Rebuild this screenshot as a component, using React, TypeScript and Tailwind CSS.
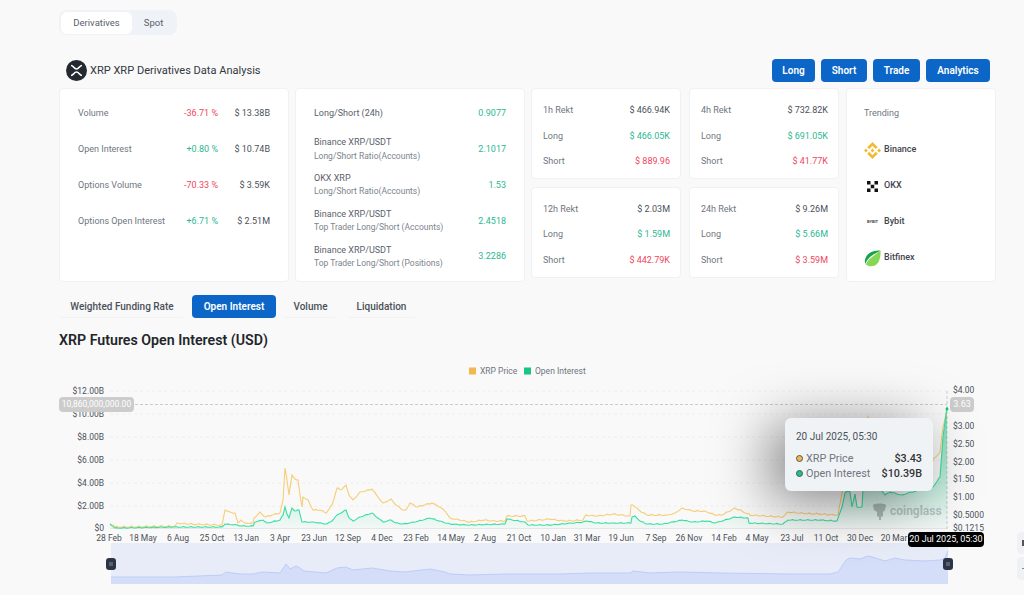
import { SiBinance } from "react-icons/si";

const font = "font-['Roboto','Liberation_Sans',sans-serif]";

const volumeRows = [
  { label: "Volume", pct: "-36.71 %", up: false, value: "$ 13.38B" },
  { label: "Open Interest", pct: "+0.80 %", up: true, value: "$ 10.74B" },
  { label: "Options Volume", pct: "-70.33 %", up: false, value: "$ 3.59K" },
  { label: "Options Open Interest", pct: "+6.71 %", up: true, value: "$ 2.51M" },
];

const ratioRows = [
  { title: "Long/Short (24h)", sub: "", value: "0.9077" },
  { title: "Binance XRP/USDT", sub: "Long/Short Ratio(Accounts)", value: "2.1017" },
  { title: "OKX XRP", sub: "Long/Short Ratio(Accounts)", value: "1.53" },
  { title: "Binance XRP/USDT", sub: "Top Trader Long/Short (Accounts)", value: "2.4518" },
  { title: "Binance XRP/USDT", sub: "Top Trader Long/Short (Positions)", value: "3.2286" },
];

const rekt = [
  [
    { name: "1h Rekt", total: "$ 466.94K", long: "$ 466.05K", short: "$ 889.96" },
    { name: "12h Rekt", total: "$ 2.03M", long: "$ 1.59M", short: "$ 442.79K" },
  ],
  [
    { name: "4h Rekt", total: "$ 732.82K", long: "$ 691.05K", short: "$ 41.77K" },
    { name: "24h Rekt", total: "$ 9.26M", long: "$ 5.66M", short: "$ 3.59M" },
  ],
];

const price =
  "110,524 113,525 115,527 175,526 177,523 190,524 222,525 225,510 230,512 235,513 238,523 241,520 245,523 253,523 254,518 260,512 265,517 272,515 280,513 283,500 285,468 287,480 289,495 292,475 295,479 298,480 300,495 302,507 303,497 308,500 313,510 320,510 326,513 332,505 337,488 341,490 346,485 349,495 353,500 360,492 365,491 372,489 378,497 383,503 391,499 396,505 403,510 406,510 410,503 417,507 424,505 432,503 440,507 446,512 450,518 460,520 470,522 483,520 495,521 505,521 507,516 525,516 527,521 550,519 565,521 583,520 586,515 597,516 613,514 630,516 631,505 633,505 640,511 647,515 667,515 675,513 682,508 693,511 705,511 715,515 722,515 735,508 742,511 750,515 783,517 788,512 800,513 820,514 838,515 842,493 846,470 868,417 872,440 900,450 925,465 930,470 933,460 940,452 943,427 947,410";
const oi =
  "110,524 115,528 173,527 222,527 225,524 237,525 242,526 253,526 255,522 263,520 267,523 280,520 283,515 285,507 287,514 289,518 292,508 295,511 299,510 302,522 313,522 327,524 332,521 337,515 346,510 349,518 353,521 360,517 372,513 378,518 383,522 391,520 396,523 403,524 415,522 430,518 443,522 450,524 467,525 505,524 507,519 525,522 528,525 550,525 583,522 587,521 597,523 613,523 631,523 632,517 635,516 640,521 647,524 663,524 682,520 693,522 707,521 715,523 735,517 748,518 749,523 783,524 788,520 820,520 837,521 842,507 845,493 847,491 850,492 852,507 855,494 857,507 862,507 863,490 868,470 885,495 890,492 902,495 908,493 920,490 933,487 940,477 943,437 947,407";
const nav =
  "111,577 130,577 175,577 222,575 226,572 240,574 253,574 262,572 280,573 286,564 290,569 296,566 300,568 304,571 326,573 337,568 346,567 353,570 372,568 390,571 405,572 430,569 445,572 450,574 470,575 505,574 525,574 560,574 590,573 630,573 633,571 650,573 680,572 720,573 790,574 830,574 838,572 846,560 850,558 860,559 868,556 872,557 885,561 895,558 905,560 925,561 940,560 945,558 948,551";

// fills in the rough traced points with a small wobble so the lines look like market data
function wobble(points: string, amount: number) {
  const pts = points.split(" ").map((p) => p.split(",").map(Number));
  const out: string[] = [];
  let seed = 7;
  for (let i = 0; i < pts.length - 1; i++) {
    const [x0, y0] = pts[i];
    const [x1, y1] = pts[i + 1];
    const steps = Math.max(1, Math.round((x1 - x0) / 1.5));
    for (let s = 0; s < steps; s++) {
      seed = (seed * 137 + 11) % 101;
      const t = s / steps;
      const j = s === 0 ? 0 : ((seed / 101) - 0.5) * amount;
      out.push(`${(x0 + (x1 - x0) * t).toFixed(1)},${(y0 + (y1 - y0) * t + j).toFixed(1)}`);
    }
  }
  out.push(pts[pts.length - 1].join(","));
  return out.join(" ");
}

const priceLine = wobble(price, 1.4);
const oiLine = wobble(oi, 0.9);

const yLeft = [
  ["$12.00B", 394],
  ["$10.00B", 417],
  ["$8.00B", 440],
  ["$6.00B", 463],
  ["$4.00B", 486],
  ["$2.00B", 509],
  ["$0", 531],
] as const;

const yRight = [
  ["$4.00", 393],
  ["$3.00", 429],
  ["$2.50", 447],
  ["$2.00", 465],
  ["$1.50", 482],
  ["$1.00", 500],
  ["$0.5000", 518],
  ["$0.1215", 531],
] as const;

const xLabels = [
  ["28 Feb", 109], ["18 May", 143], ["6 Aug", 178], ["25 Oct", 212], ["13 Jan", 246], ["3 Apr", 280],
  ["23 Jun", 314], ["12 Sep", 348], ["4 Dec", 382], ["23 Feb", 416], ["14 May", 451], ["2 Aug", 485],
  ["21 Oct", 519], ["10 Jan", 553], ["31 Mar", 587], ["19 Jun", 621], ["7 Sep", 656], ["26 Nov", 689],
  ["14 Feb", 724], ["4 May", 757], ["23 Jul", 792], ["11 Oct", 826], ["30 Dec", 860], ["20 Mar", 894],
] as const;

function Card({ className, children }: { className: string; children: React.ReactNode }) {
  return <div className={`rounded bg-white border border-[#f0f1f3] ${className}`}>{children}</div>;
}

function RektCard({ name, total, long, short }: { name: string; total: string; long: string; short: string }) {
  return (
    <Card className="flex h-[91px] w-[150px] flex-col justify-center gap-[15.500px] pl-[11px] pr-[10px] pt-[4px] text-[9px] leading-[10px] text-[#6f7680]">
      <div className="flex justify-between"><span>{name}</span><span className="text-[#4b5159]">{total}</span></div>
      <div className="flex justify-between"><span>Long</span><span className="text-[#2cb892]">{long}</span></div>
      <div className="flex justify-between"><span>Short</span><span className="text-[#f0465c]">{short}</span></div>
    </Card>
  );
}

function Chart() {
  return (
    <div className="relative mt-[11px] h-[235px] w-full">
      <svg width="1024" height="235" viewBox="0 360 1024 235" className="block">
        <defs>
          <linearGradient id="oiFill" gradientUnits="userSpaceOnUse" x1="0" y1="407" x2="0" y2="528">
            <stop offset="0" stopColor="#16c784" stopOpacity="0.6" />
            <stop offset="1" stopColor="#16c784" stopOpacity="0.03" />
          </linearGradient>
        </defs>
        <rect x="469" y="367.500" width="7" height="7" fill="#efb94f" />
        <text x="480" y="374" fontSize="8.500" fill="#6f7680">XRP Price</text>
        <rect x="524" y="367.500" width="7" height="7" fill="#18c585" />
        <text x="535" y="374" fontSize="8.500" fill="#6f7680">Open Interest</text>

        {[391, 414, 437, 460, 483, 506].map((y) => (
          <line key={y} x1="110" x2="947" y1={y} y2={y} stroke="#eceef0" strokeDasharray="3 3" />
        ))}
        <line x1="110" x2="947" y1="528.500" y2="528.500" stroke="#e4e6e9" />
        <line x1="135" x2="947" y1="404.500" y2="404.500" stroke="#c9cccf" strokeDasharray="3 2" />
        <line x1="947" x2="947" y1="391" y2="530" stroke="#c9cccf" strokeDasharray="3 2" />

        <polygon points={`${oi} 947,528 110,528`} fill="url(#oiFill)" />
        <polyline points={priceLine} fill="none" stroke="#f7cd76" strokeWidth="1.100" />
        <polyline points={oiLine} fill="none" stroke="#38dfa0" strokeWidth="1.100" />

        {yLeft.map(([t, y]) => (
          <text key={t} x="104" y={y} textAnchor="end" fontSize="8.500" fill="#4b5159">{t}</text>
        ))}
        {yRight.map(([t, y]) => (
          <text key={t} x="953" y={y} fontSize="8.500" fill="#4b5159">{t}</text>
        ))}
        {xLabels.map(([t, x]) => (
          <text key={t} x={x} y="541" textAnchor="middle" fontSize="8.500" fill="#4b5159">{t}</text>
        ))}

        <rect x="111" y="543" width="837" height="41" fill="#e8ecf9" />
        <polygon points={`${nav} 948,584 111,584`} fill="#d4def9" />
        <polyline points={nav} fill="none" stroke="#bccdf7" strokeWidth="1" />
        <rect x="106" y="558" width="10" height="12" rx="3" fill="#2d3446" />
        <rect x="943" y="558" width="10" height="12" rx="3" fill="#2d3446" />
        <path d="M110 562v4M112 562v4M947 562v4M949 562v4" stroke="#9aa3b5" strokeWidth="0.800" />
        <circle cx="947" cy="409" r="1.500" fill="#18c585" />
      </svg>

      {/* axis pointer labels */}
      <div className="absolute left-[59px] top-[37px] flex h-[15px] w-[75px] items-center justify-center rounded-sm bg-[#cccccc] text-[8.500px] text-white">10,860,000,000.00</div>
      <div className="absolute left-[950px] top-[37px] flex h-[15px] w-[24px] items-center justify-center rounded-sm bg-[#cccccc] text-[9px] text-white">3.63</div>
      <div className="absolute left-[908px] top-[172px] flex h-[15px] w-[76px] items-center justify-center rounded-sm bg-black text-[9px] text-white">20 Jul 2025, 05:30</div>

      {/* watermark */}
      <div className="absolute left-[872px] top-[142px] flex items-center gap-[3px] opacity-40">
        <svg width="15" height="18" viewBox="0 0 15 18">
          <path d="M1 3c2-2 11-2 13 0l-1 5-2 2v4l-2 1v3H7v-3l-2-1v-4L2 8z" fill="#5f666d" />
        </svg>
        <span className="text-[12px] font-semibold text-[#6f7680]">coinglass</span>
      </div>

      {/* tooltip */}
      <div className="absolute left-[785px] top-[58px] h-[73px] w-[148px] rounded-md bg-[#f0f3f6] px-[11px] pt-[12px] text-[10px] text-[#4b5159] shadow-[-14px_8px_55px_rgba(0,0,0,0.5)]">
        <div className="leading-[13px]">20 Jul 2025, 05:30</div>
        <div className="mt-[8px] flex items-center text-[10.800px] leading-[15px]">
          <span className="mr-[3px] h-[7px] w-[7px] rounded-full border border-[#555] bg-[#efb94f]" />
          <span className="flex-1 text-[#6f7680]">XRP Price</span>
          <span className="font-medium text-[#333]">$3.43</span>
        </div>
        <div className="flex items-center text-[10.800px] leading-[15px]">
          <span className="mr-[3px] h-[7px] w-[7px] rounded-full border border-[#555] bg-[#18c585]" />
          <span className="flex-1 text-[#6f7680]">Open Interest</span>
          <span className="font-medium text-[#333]">$10.39B</span>
        </div>
      </div>

      {/* floating side buttons, cut off by the window */}
      <div className="absolute left-[1017px] top-[172px] flex h-[22px] w-[20px] items-center rounded bg-[#eff1f4] pl-[5px]"><span className="h-[6px] w-[2px] bg-[#555]" /></div>
      <div className="absolute left-[1017px] top-[197px] flex h-[23px] w-[20px] items-center rounded bg-[#eff1f4] pl-[5px]"><span className="h-[1px] w-[2px] bg-[#888]" /></div>
    </div>
  );
}

export default function App() {
  return (
    <div className={`h-[595px] w-[1024px] overflow-hidden bg-[#f9f9f9] ${font}`}>
      <div className="pl-[59px] pt-[10px]">
        <div className="flex h-[25px] w-[118px] items-center rounded-lg bg-[#eff2f6] p-[2px] text-[9.500px] text-[#5a616b]">
          <div className="flex h-[22px] w-[71px] items-center justify-center rounded-md bg-white pt-[1px]">Derivatives</div>
          <div className="flex-1 pt-[1px] text-center">Spot</div>
        </div>
      </div>

      <div className="mt-[24px] flex h-[23px] items-center justify-between pl-[66px] pr-[34px]">
        <div className="flex items-center gap-[3px]">
          <svg width="21" height="21" viewBox="0 0 21 21">
            <circle cx="10.500" cy="10.500" r="10.500" fill="#23292f" />
            <path d="M5 5.500c2.500 0 3 3.500 5.500 3.500S13.500 5.500 16 5.500M5 15.500c2.500 0 3-3.500 5.500-3.500s3 3.500 5.500 3.500" fill="none" stroke="#fff" strokeWidth="1.700" />
          </svg>
          <span className="pt-[1px] text-[11.050px] text-[#33383f]">XRP XRP Derivatives Data Analysis</span>
        </div>
        <div className="flex gap-[6px] text-[10px] font-semibold text-white">
          <button className="h-[23px] w-[43px] rounded bg-[#0b66c8]">Long</button>
          <button className="h-[23px] w-[46px] rounded bg-[#0b66c8]">Short</button>
          <button className="h-[23px] w-[47px] rounded bg-[#0b66c8]">Trade</button>
          <button className="h-[23px] w-[64px] rounded bg-[#0b66c8]">Analytics</button>
        </div>
      </div>

      <div className="mt-[6px] flex pl-[59px]">
        <Card className="mr-[6px] h-[194px] w-[230px] px-[18px] pt-[7px] text-[9px] text-[#6f7680]">
          {volumeRows.map((r) => (
            <div key={r.label} className="flex h-[35.800px] items-center">
              <span className="flex-1">{r.label}</span>
              <span className={r.up ? "text-[#2cb892]" : "text-[#f0465c]"}>{r.pct}</span>
              <span className="w-[52px] text-right text-[#4b5159]">{r.value}</span>
            </div>
          ))}
        </Card>

        <Card className="mr-[6px] h-[194px] w-[230px] px-[18px] pt-[7px] text-[9px] text-[#6f7680]">
          {ratioRows.map((r) => (
            <div key={r.value} className="flex h-[35.800px] items-center justify-between">
              <div className="leading-[13.500px]">
                <div className="text-[#5a616b]">{r.title}</div>
                {r.sub && <div className="text-[8.500px] text-[#7d848d]">{r.sub}</div>}
              </div>
              <span className="text-[#2cb892]">{r.value}</span>
            </div>
          ))}
        </Card>

        <div className="mr-[8px] flex flex-col gap-[7.500px]">
          {rekt[0].map((c) => <RektCard key={c.name} {...c} />)}
        </div>
        <div className="mr-[7px] flex flex-col gap-[7.500px]">
          {rekt[1].map((c) => <RektCard key={c.name} {...c} />)}
        </div>

        <Card className="h-[194px] w-[150px] pl-[17px] pt-[7px] text-[9px] font-medium text-[#3f454c]">
          <div className="flex h-[36px] items-center font-normal text-[#6f7680]">Trending</div>
          <div className="flex h-[36px] items-center gap-[3px]">
            <SiBinance className="h-[17px] w-[17px] text-[#f3ba2f]" />Binance
          </div>
          <div className="flex h-[36px] items-center gap-[3px]">
            <svg width="17" height="17" viewBox="0 0 17 17">
              <path d="M3 3h3.500v3.500H3zM10.500 3H14v3.500h-3.500zM6.750 6.750h3.500v3.500h-3.500zM3 10.500h3.500V14H3zM10.500 10.500H14V14h-3.500z" fill="#111" />
            </svg>
            OKX
          </div>
          <div className="flex h-[36px] items-center gap-[3px]">
            <span className="w-[17px] text-center text-[4px] font-bold leading-none text-[#444]">BYBIT</span>Bybit
          </div>
          <div className="flex h-[36px] items-center gap-[3px]">
            <svg width="17" height="17" viewBox="0 0 17 17">
              <path d="M16.500 0.500C10 0.500 2 2 0.800 11c0 1 .2 2 .7 2.800C4 6.500 10 4.500 16.500 .5z" fill="#16a34a" />
              <path d="M16.500 0.500C11 5 5 8 1.800 14.200 4 16.500 8 16.800 11 15.500c4-2 6-8 5.500-15z" fill="#86d756" />
            </svg>
            Bitfinex
          </div>
        </Card>
      </div>

      <div className="mt-[13px] flex h-[23px] gap-[7px] pl-[59px] text-[10px] font-medium text-[#4b5159]">
        <div className="flex w-[126px] items-center justify-center rounded border-b border-[#f1f2f3]">Weighted Funding Rate</div>
        <div className="flex w-[84px] items-center justify-center rounded bg-[#0b66c8] font-semibold text-white">Open Interest</div>
        <div className="flex w-[55px] items-center justify-center rounded border-b border-[#f1f2f3]">Volume</div>
        <div className="ml-[1px] flex w-[71px] items-center justify-center rounded border-b border-[#f1f2f3]">Liquidation</div>
      </div>

      <h2 className="mt-[13px] pl-[59px] text-[14.200px] font-semibold leading-[18px] text-[#22262b]">XRP Futures Open Interest (USD)</h2>

      <Chart />
    </div>
  );
}
